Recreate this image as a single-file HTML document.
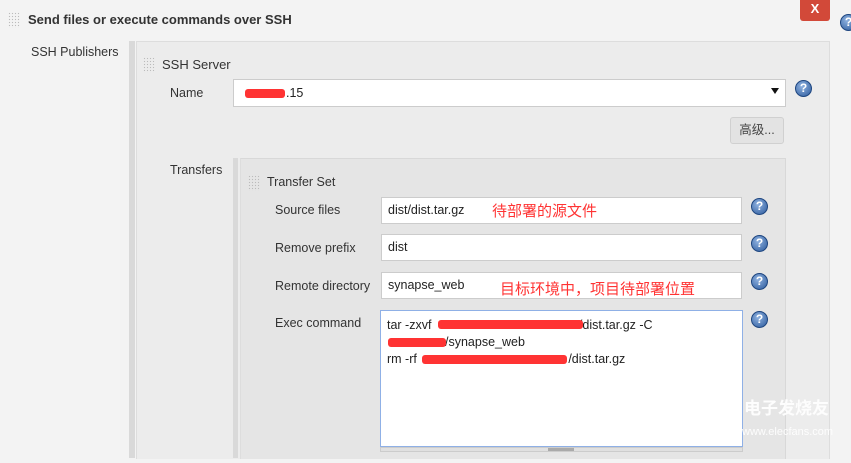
<!DOCTYPE html>
<html><head><meta charset="utf-8"><style>
body{margin:0;width:851px;height:463px;background:#f3f3f3;position:relative;overflow:hidden;font-family:"Liberation Sans","Noto Sans CJK SC",sans-serif;font-size:12.5px;color:#333}
.a{position:absolute}
.grip{position:absolute;width:12px;height:16px;background-image:radial-gradient(#bbb 0.7px,transparent 0.8px);background-size:3px 3px}
.inp{position:absolute;background:#fff;border:1px solid #ccc;box-sizing:border-box;padding-left:6px;line-height:24px;color:#222}
.help{position:absolute;width:17px;height:17px;border-radius:50%;background:radial-gradient(circle at 40% 35%,#8fb2e0,#2c5a9c);border:1px solid #1e4680;box-sizing:border-box;color:#fff;font-weight:bold;font-size:12px;text-align:center;line-height:15px}
.lbl{position:absolute;color:#333}
.red{position:absolute;background:#f33;height:9px;border-radius:3px}
</style></head><body>
<div class="grip" style="left:8px;top:12px"></div>
<div class="a" style="left:28px;top:12px;font-weight:bold;font-size:13px">Send files or execute commands over SSH</div>
<div class="a" style="left:800px;top:0;width:30px;height:21px;background:#d24939;border-radius:0 0 3px 3px;color:#fff;font-weight:bold;text-align:center;line-height:18px;font-size:13px">X</div>
<div class="help" style="left:840px;top:14px">?</div>
<div class="lbl" style="left:31px;top:45px">SSH Publishers</div>

<div class="a" style="left:129px;top:41px;width:6px;height:417px;background:#d9d9d9"></div>
<div class="a" style="left:136px;top:41px;width:692px;height:417px;background:#ececec;border-left:1px solid #ddd;border-top:1px solid #ddd;border-right:1px solid #ddd"></div>
<div class="grip" style="left:143px;top:57px"></div>
<div class="lbl" style="left:162px;top:57px;font-size:13px">SSH Server</div>
<div class="lbl" style="left:170px;top:86px">Name</div>
<div class="inp" style="left:233px;top:79px;width:553px;height:28px;line-height:26px;padding-left:10px"><span style="display:inline-block;width:42px"></span>.15</div>
<div class="red" style="left:245px;top:89px;width:40px"></div>
<div class="a" style="left:771px;top:88px;width:0;height:0;border-left:4px solid transparent;border-right:4px solid transparent;border-top:6px solid #111"></div>
<div class="help" style="left:795px;top:80px">?</div>
<div class="a" style="left:730px;top:117px;width:54px;height:27px;background:#e3e3e3;border:1px solid #d0d0d0;border-radius:3px;box-sizing:border-box;text-align:center;line-height:25px;color:#444">高级...</div>
<div class="lbl" style="left:170px;top:163px">Transfers</div>

<div class="a" style="left:233px;top:158px;width:5px;height:300px;background:#d9d9d9"></div>
<div class="a" style="left:240px;top:158px;width:544px;height:300px;background:#e5e5e5;border-left:1px solid #ddd;border-top:1px solid #d8d8d8;border-right:1px solid #d8d8d8"></div>
<div class="grip" style="left:248px;top:175px"></div>
<div class="lbl" style="left:267px;top:175px">Transfer Set</div>

<div class="lbl" style="left:275px;top:203px">Source files</div>
<div class="inp" style="left:381px;top:197px;width:361px;height:27px">dist/dist.tar.gz</div>
<div class="a" style="left:492px;top:200px;color:#f33;font-size:15px">待部署的源文件</div>
<div class="help" style="left:751px;top:198px">?</div>

<div class="lbl" style="left:275px;top:241px">Remove prefix</div>
<div class="inp" style="left:381px;top:234px;width:361px;height:27px">dist</div>
<div class="help" style="left:751px;top:235px">?</div>

<div class="lbl" style="left:275px;top:279px">Remote directory</div>
<div class="inp" style="left:381px;top:272px;width:361px;height:27px">synapse_web</div>
<div class="a" style="left:500px;top:278px;color:#f33;font-size:15px">目标环境中，项目待部署位置</div>
<div class="help" style="left:751px;top:273px">?</div>

<div class="lbl" style="left:275px;top:316px">Exec command</div>
<div class="a" style="left:380px;top:310px;width:363px;height:137px;background:#fff;border:1px solid #8fb0e6;box-sizing:border-box;padding:6px 6px;line-height:17px;color:#222">tar -zxvf <span style="display:inline-block;width:144px"></span>/dist.tar.gz -C<br><span style="display:inline-block;width:58px"></span>/synapse_web<br>rm -rf <span style="display:inline-block;width:148px"></span>/dist.tar.gz</div>
<div class="red" style="left:438px;top:320px;width:145px"></div>
<div class="red" style="left:388px;top:338px;width:58px"></div>
<div class="red" style="left:422px;top:355px;width:145px"></div>
<div class="a" style="left:380px;top:447px;width:363px;height:5px;background:#e0e0e0;border:1px solid #ccc;box-sizing:border-box"></div>
<div class="a" style="left:548px;top:448px;width:26px;height:3px;background:#aaa"></div>
<div class="help" style="left:751px;top:311px">?</div>

<div class="a" style="left:706px;top:400px;width:34px;height:40px;border:2px solid rgba(255,255,255,0.85);border-radius:50%;box-sizing:border-box"></div>
<div class="a" style="left:744px;top:394px;color:rgba(255,255,255,0.9);font-size:17px;font-weight:bold">电子发烧友</div>
<div class="a" style="left:742px;top:426px;color:rgba(255,255,255,0.9);font-size:11px">www.elecfans.com</div>
</body></html>
